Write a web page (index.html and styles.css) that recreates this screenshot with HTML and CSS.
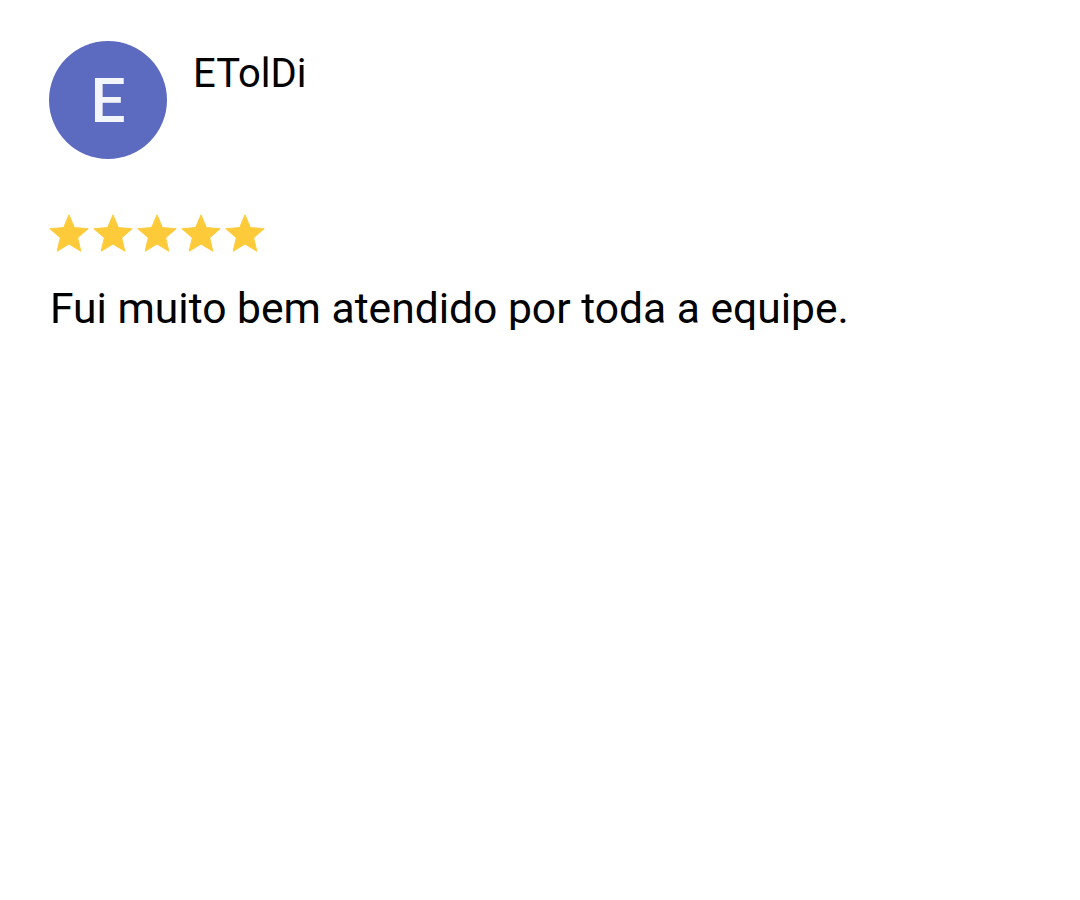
FILE: index.html
```html
<!DOCTYPE html>
<html lang="pt">

<head>
    <meta charset="UTF-8">
    <meta name="viewport" content="width=device-width, initial-scale=1.0">
    <title>review</title>
    <link rel="stylesheet" href="styles.css">
</head>

<body>
    <div class="review">
        <div class="head">
            <div class="avatar">E</div>
            <div class="name">ETolDi</div>
        </div>
        <div class="stars">
            <svg class="star" viewBox="0 0 24 24"><path d="M12 17.27L18.18 21l-1.64-7.03L22 9.24l-7.19-.61L12 2 9.19 8.63 2 9.24l5.46 4.73L5.82 21z"/></svg>
            <svg class="star" viewBox="0 0 24 24"><path d="M12 17.27L18.18 21l-1.64-7.03L22 9.24l-7.19-.61L12 2 9.19 8.63 2 9.24l5.46 4.73L5.82 21z"/></svg>
            <svg class="star" viewBox="0 0 24 24"><path d="M12 17.27L18.18 21l-1.64-7.03L22 9.24l-7.19-.61L12 2 9.19 8.63 2 9.24l5.46 4.73L5.82 21z"/></svg>
            <svg class="star" viewBox="0 0 24 24"><path d="M12 17.27L18.18 21l-1.64-7.03L22 9.24l-7.19-.61L12 2 9.19 8.63 2 9.24l5.46 4.73L5.82 21z"/></svg>
            <svg class="star" viewBox="0 0 24 24"><path d="M12 17.27L18.18 21l-1.64-7.03L22 9.24l-7.19-.61L12 2 9.19 8.63 2 9.24l5.46 4.73L5.82 21z"/></svg>
        </div>
        <div class="text">Fui muito bem atendido por toda a equipe.</div>
    </div>
</body>

</html>
```

FILE: styles.css
```css
body{
    margin: 0;
    padding: 0;
    background-color: #fff;
    font-family: Roboto, 'Liberation Sans', sans-serif;
    color: #000;
}
* {
    box-sizing: border-box;
}
.review{
    padding: 41px 0 0 49px;
}
.head{
    display: flex;
    gap: 26px;
}
.avatar{
    width: 118px;
    height: 118px;
    border-radius: 50%;
    background-color: #5c6bc0;
    color: #f4f4fb;
    display: flex;
    justify-content: center;
    align-items: center;
    font-size: 62px;
    font-weight: 500;
    filter: blur(0.6px);
}
.name{
    font-size: 40px;
    line-height: 40px;
    margin-top: 13px;
}
.stars{
    display: flex;
    margin-top: 52px;
    margin-left: -3px;
}
.star{
    width: 46px;
    height: 46px;
    margin-right: -2px;
    fill: #fdcb3a;
    stroke: #fdcb3a;
    stroke-width: 0.5;
    stroke-linejoin: round;
}
.text{
    font-size: 42.6px;
    line-height: 44px;
    margin-top: 29px;
    margin-left: 1px;
}
```
